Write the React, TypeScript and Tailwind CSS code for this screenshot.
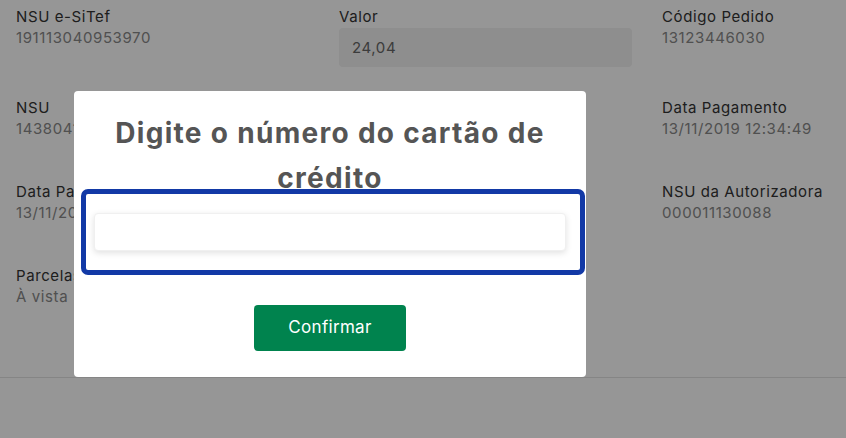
import React from "react";

interface Campo {
  label: string;
  value: string;
  input?: boolean;
}

const linhas: Campo[][] = [
  [
    { label: "NSU e-SiTef", value: "191113040953970" },
    { label: "Valor", value: "24,04", input: true },
    { label: "Código Pedido", value: "13123446030" },
  ],
  [
    { label: "NSU", value: "143804112" },
    { label: "", value: "" },
    { label: "Data Pagamento", value: "13/11/2019 12:34:49" },
  ],
  [
    { label: "Data Pagamento", value: "13/11/2019" },
    { label: "", value: "" },
    { label: "NSU da Autorizadora", value: "000011130088" },
  ],
  [
    { label: "Parcelas", value: "À vista" },
    { label: "", value: "" },
    { label: "", value: "" },
  ],
];

const App: React.FC = () => {
  return (
    <div className="relative h-[438px] w-[846px] overflow-hidden bg-white font-['Inter',sans-serif]">
      {/* Detalhes do pagamento */}
      <div className="grid grid-cols-[293px_293px_293px] gap-x-[30px] px-4 pb-[28px] pt-[6px]">
        {linhas.map((linha, i) =>
          linha.map((c, j) => (
            <div
              key={`${i}-${j}`}
              className={`${i === 0 ? "h-[91px]" : "h-[84px]"} text-[15px] leading-[21px] tracking-[0.6px]`}
            >
              <div className="text-[#333]">{c.label}</div>
              {c.input ? (
                <div className="mt-[1px] flex h-[39px] items-center rounded-[4px] bg-[#f1f1f1] px-[13px] text-[#666]">
                  {c.value}
                </div>
              ) : (
                <div className="text-[#888]">{c.value}</div>
              )}
            </div>
          ))
        )}
      </div>
      <div className="border-t border-[#e2e2e2] pt-[60px]" />

      {/* Fundo escuro */}
      <div className="absolute inset-0 bg-black/[0.41]" />

      {/* Modal */}
      <div className="absolute left-[74px] top-[91px] flex h-[286px] w-[512px] flex-col items-center rounded-[4px] bg-white">
        <h2 className="mt-[20px] px-8 text-center text-[28px] font-bold leading-[45px] tracking-[1.3px] text-[#555]">
          Digite o número do cartão de crédito
        </h2>
        <div className="relative -mt-[7px] self-stretch pl-[12px] pr-[6px]">
          <div className="rounded-[2px] pb-[19px] pl-[8px] pr-[14px] pt-[19px] outline outline-[5px] outline-[#1239a6]">
            <input
              type="text"
              className="block h-[38px] w-full rounded-[4px] border border-[#f0f0f0] bg-white px-3 text-[15px] shadow-[0_2px_6px_rgba(0,0,0,0.12)] outline-none"
            />
          </div>
        </div>
        <button className="mt-[35px] h-[46px] w-[152px] rounded-[4px] bg-[#00834e] text-[17px] tracking-[0.3px] text-white">
          Confirmar
        </button>
      </div>
    </div>
  );
};

export default App;
